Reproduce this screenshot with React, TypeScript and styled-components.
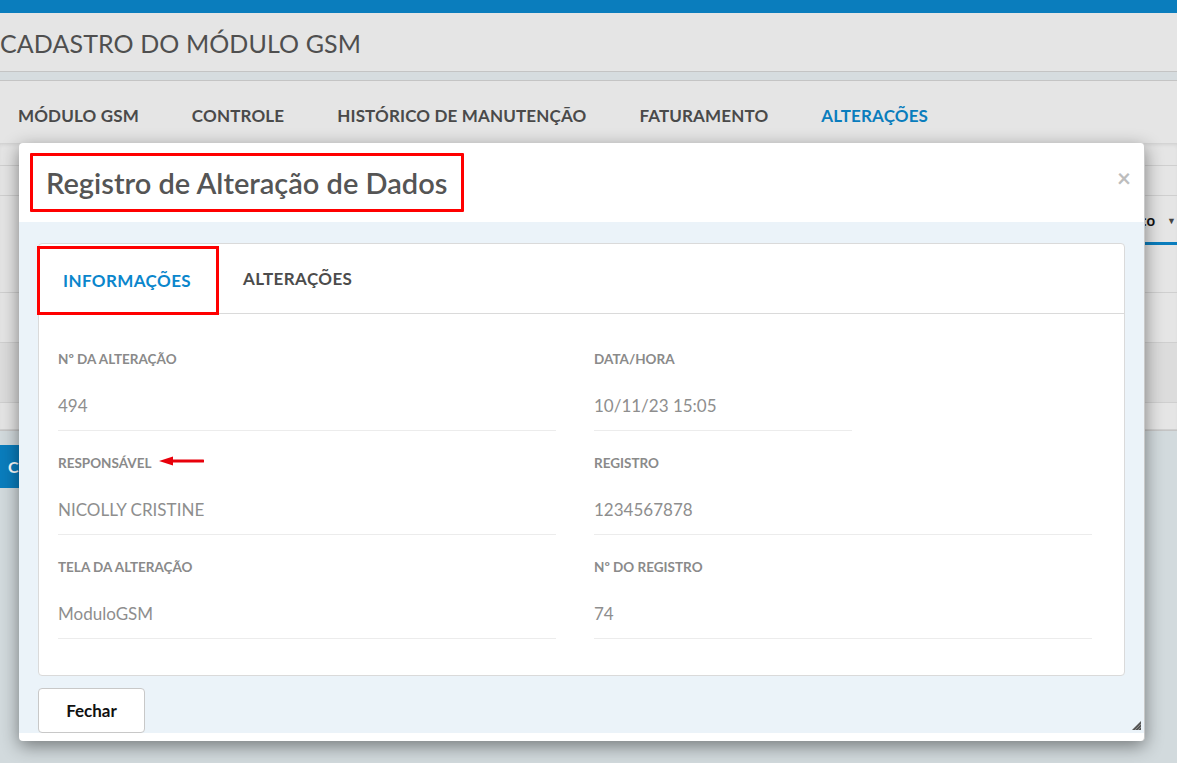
import React from "react";
import styled, { createGlobalStyle } from "styled-components";

const GlobalStyle = createGlobalStyle`
  html, body {
    margin: 0;
    padding: 0;
    height: 100%;
    overflow: hidden;
    font-family: "Lato", "Noto Sans", sans-serif;
    background: #d2dadd;
  }
  #root {
    min-height: 100%;
  }
`;

const Page = styled.div`
  position: relative;
  width: 1177px;
  height: 763px;
  overflow: hidden;
  background: #d2dadd;
`;

const TopBar = styled.div`
  height: 13px;
  background: #0a7dbd;
`;

const PageHeader = styled.header`
  height: 58px;
  display: flex;
  align-items: center;
  background: #e5e5e5;
  border-bottom: 1px solid #c4c4c4;
`;

const PageTitle = styled.h1`
  margin: 0;
  padding-top: 2px;
  font-size: 25px;
  font-weight: 400;
  color: #4f4f4f;
  letter-spacing: 0.1px;
`;

const Strip = styled.div`
  height: 8px;
  background: #d6dcdf;
  border-bottom: 1px solid #c4c4c4;
`;

const NavBar = styled.nav`
  height: 62px;
  display: flex;
  align-items: center;
  padding: 6px 0 0 18px;
  box-sizing: border-box;
  gap: 53px;
  background: #e5e5e5;
`;

const NavItem = styled.span<{ $active?: boolean }>`
  font-size: 17px;
  font-weight: 700;
  letter-spacing: 0.15px;
  color: ${(p) => (p.$active ? "#0a7dbd" : "#4a4a4a")};
`;

const Panel = styled.section`
  height: 287px;
  display: flex;
  flex-direction: column;
  background: #e5e5e5;
  border-bottom: 1px solid #c4c4c4;
  box-shadow: inset 0 3px 4px -2px rgba(0, 0, 0, 0.12);
`;

const PanelRow = styled.div<{ $h: number; $shade?: boolean }>`
  height: ${(p) => p.$h}px;
  border-bottom: 1px solid #cfcfcf;
  background: ${(p) => (p.$shade ? "#dcdcdc" : "transparent")};
`;

const SubTabRow = styled.div`
  height: 50px;
  display: flex;
  justify-content: flex-end;
  align-items: flex-end;
`;

const SubTab = styled.span`
  display: flex;
  align-items: center;
  padding: 0 0 13px 24px;
  font-size: 15px;
  font-weight: 700;
  color: #111;
  border-bottom: 3px solid #0a7dbd;
`;

const Caret = styled.span`
  margin: 0 1px 0 12px;
  font-size: 9px;
  color: #444;
`;

const LowerArea = styled.div`
  padding-top: 14px;
`;

const BlueButton = styled.div`
  width: 90px;
  height: 43px;
  display: flex;
  align-items: center;
  padding-left: 8px;
  box-sizing: border-box;
  background: #0a7dbd;
  color: #fff;
  font-size: 16px;
  font-weight: 700;
`;

/* dialog */

const Modal = styled.div`
  position: absolute;
  left: 19px;
  top: 143px;
  width: 1126px;
  height: 598px;
  display: flex;
  flex-direction: column;
  box-sizing: border-box;
  padding-bottom: 8px;
  background: #fff;
  border-radius: 4px;
  border-right: 1px solid #c9c9c9;
  box-shadow: 0 5px 18px rgba(0, 0, 0, 0.45);
`;

const ModalHeader = styled.div`
  height: 79px;
  display: flex;
  align-items: center;
  justify-content: space-between;
  padding: 0 13px 0 11px;
  box-sizing: border-box;
`;

const Highlight = styled.div`
  border: 3px solid #f00;
  border-radius: 1px;
`;

const ModalTitle = styled.h2`
  margin: 0;
  height: 53px;
  display: flex;
  align-items: center;
  padding: 0 14px 0 13px;
  font-size: 29px;
  font-weight: 600;
  color: #555;
`;

const CloseButton = styled.span`
  margin-top: -10px;
  font-size: 24px;
  font-weight: 700;
  color: #bdbdbd;
  line-height: 1;
`;

const ModalBody = styled.div`
  position: relative;
  flex: 1;
  display: flex;
  flex-direction: column;
  padding: 21px 19px 0 19px;
  background: #ebf3f9;
`;

const Card = styled.div`
  height: 433px;
  box-sizing: border-box;
  background: #fff;
  border: 1px solid #dadada;
  border-radius: 4px;
`;

const TabList = styled.div`
  height: 69px;
  display: flex;
  align-items: stretch;
  border-bottom: 1px solid #dadada;
`;

const Tab = styled.div<{ $active?: boolean; $marked?: boolean }>`
  display: flex;
  align-items: center;
  box-sizing: border-box;
  margin-left: ${(p) => (p.$marked ? "-2px" : "0")};
  margin-top: ${(p) => (p.$marked ? "2px" : "0")};
  height: ${(p) => (p.$marked ? "69px" : "auto")};
  padding: ${(p) => (p.$marked ? "0 25px 0 23px" : "0 24px")};
  border: ${(p) => (p.$marked ? "3px solid #f00" : "none")};
  font-size: 17px;
  font-weight: 700;
  letter-spacing: 0.4px;
  color: ${(p) => (p.$active ? "#0a86cc" : "#4c4c4c")};
`;

const Fields = styled.div`
  display: grid;
  grid-template-columns: 498px 498px;
  column-gap: 38px;
  padding: 13px 0 0 19px;
`;

const Field = styled.div<{ $narrow?: boolean }>`
  width: ${(p) => (p.$narrow ? "258px" : "auto")};
  padding: 22px 0 12px;
  border-bottom: 1px solid #ececec;
`;

const Label = styled.div`
  display: flex;
  align-items: center;
  height: 20px;
  font-size: 13.5px;
  font-weight: 700;
  color: #8a8a8a;
`;

const Value = styled.div`
  margin-top: 25px;
  height: 24px;
  line-height: 24px;
  font-size: 17px;
  font-weight: 400;
  color: #8e8e8e;
`;

const Arrow = styled.svg`
  margin-left: 8px;
  margin-top: -4px;
`;

const Footer = styled.div`
  padding-top: 12px;
`;

const Button = styled.button`
  width: 107px;
  height: 45px;
  background: #fff;
  border: 1px solid #c8c8c8;
  border-radius: 4px;
  font-family: inherit;
  font-size: 17px;
  font-weight: 700;
  color: #111;
`;

const ResizeGrip = styled.svg`
  position: absolute;
  right: 3px;
  bottom: 3px;
`;

type Info = { label: string; value: string; narrow?: boolean; marked?: boolean };

const fields: Info[] = [
  { label: "Nº DA ALTERAÇÃO", value: "494" },
  { label: "DATA/HORA", value: "10/11/23 15:05", narrow: true },
  { label: "RESPONSÁVEL", value: "NICOLLY CRISTINE", marked: true },
  { label: "REGISTRO", value: "1234567878" },
  { label: "TELA DA ALTERAÇÃO", value: "ModuloGSM" },
  { label: "Nº DO REGISTRO", value: "74" },
];

const navItems = ["MÓDULO GSM", "CONTROLE", "HISTÓRICO DE MANUTENÇÃO", "FATURAMENTO", "ALTERAÇÕES"];

export default function App() {
  return (
    <>
      <GlobalStyle />
      <Page>
        <TopBar />
        <PageHeader>
          <PageTitle>CADASTRO DO MÓDULO GSM</PageTitle>
        </PageHeader>
        <Strip />
        <NavBar>
          {navItems.map((item) => (
            <NavItem key={item} $active={item === "ALTERAÇÕES"}>
              {item}
            </NavItem>
          ))}
        </NavBar>
        <Panel>
          <PanelRow $h={22} />
          <PanelRow $h={30} />
          <SubTabRow>
            <SubTab>
              Endereço<Caret>▼</Caret>
            </SubTab>
          </SubTabRow>
          <PanelRow $h={48} />
          <PanelRow $h={50} />
          <PanelRow $h={60} $shade />
          <PanelRow $h={26} />
        </Panel>
        <LowerArea>
          <BlueButton>C</BlueButton>
        </LowerArea>

        <Modal>
          <ModalHeader>
            <Highlight>
              <ModalTitle>Registro de Alteração de Dados</ModalTitle>
            </Highlight>
            <CloseButton>×</CloseButton>
          </ModalHeader>
          <ModalBody>
            <Card>
              <TabList>
                <Tab $active $marked>
                  INFORMAÇÕES
                </Tab>
                <Tab>ALTERAÇÕES</Tab>
              </TabList>
              <Fields>
                {fields.map((f) => (
                  <Field key={f.label} $narrow={f.narrow}>
                    <Label>
                      {f.label}
                      {f.marked && (
                        <Arrow width="45" height="10" viewBox="0 0 45 10">
                          <path d="M44 5 H12" stroke="#e8000b" strokeWidth="3" strokeLinecap="round" />
                          <path d="M0 5 L14 0.5 L14 9.5 Z" fill="#e8000b" />
                        </Arrow>
                      )}
                    </Label>
                    <Value>{f.value}</Value>
                  </Field>
                ))}
              </Fields>
            </Card>
            <Footer>
              <Button>Fechar</Button>
            </Footer>
            <ResizeGrip width="9" height="9" viewBox="0 0 9 9">
              <path d="M9 0 L9 9 L0 9 Z" fill="#555" />
              <path d="M9 3 L3 9 M9 6 L6 9" stroke="#999" strokeWidth="0.8" />
            </ResizeGrip>
          </ModalBody>
        </Modal>
      </Page>
    </>
  );
}
